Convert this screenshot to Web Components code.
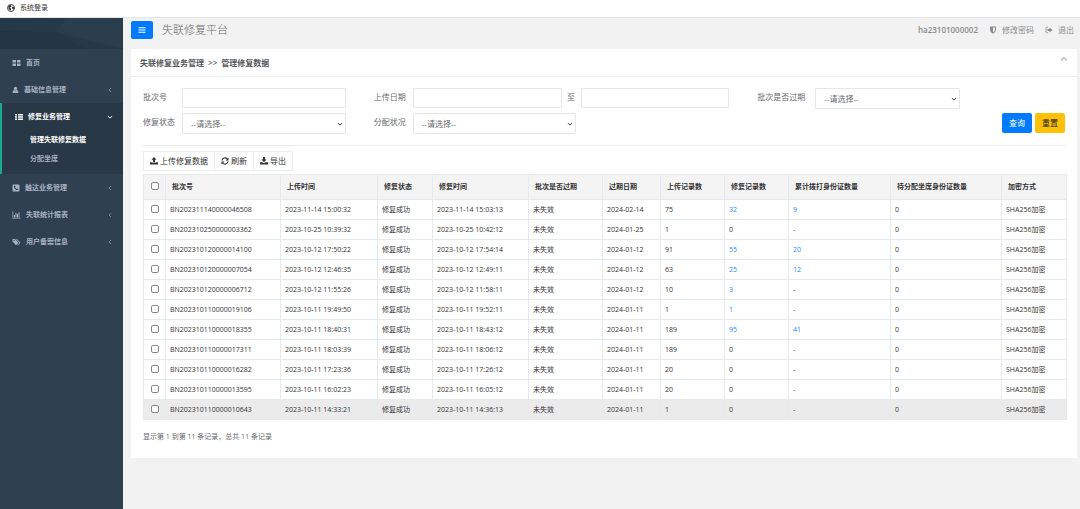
<!DOCTYPE html>
<html lang="zh-CN">
<head>
<meta charset="utf-8">
<meta name="viewport" content="width=device-width, initial-scale=1">
<title>失联修复平台</title>
<style>
html, body { margin: 0; height: 100%; }
body {
  font-family: "Open Sans", "Noto Sans CJK SC", sans-serif;
  font-size: 7px; line-height: 12px; color: #676a6c; background: #f2f2f2;
}
</style>
</head>
<body>
<repair-app></repair-app>
<script>
const ICONS = {
  globe: '<circle cx="8" cy="8" r="7" fill="none" stroke="currentColor" stroke-width="1.8"/><path d="M3 3l5-1 1 3-3 2 2 2 0 3-2 1-3-4zM11 5l4 2-1 4-3-1-1-3z"/>',
  grid: '<path d="M0 2h7v5H0zM9 2h7v5H9zM0 9h7v5H0zM9 9h7v5H9z"/>',
  user: '<circle cx="8" cy="4.5" r="3.7"/><path d="M1.500 15V12Q2 8 5 8q3 2 6 0 3 0 3.500 4v3z"/>',
  list: '<path d="M0 2h4v3H0zM6 2h10v3H6zM0 6.500h4v3H0zM6 6.500h10v3H6zM0 11h4v3H0zM6 11h10v3H6z"/>',
  phone: '<path fill-rule="evenodd" d="M3 1h10a2 2 0 0 1 2 2v10a2 2 0 0 1-2 2H3a2 2 0 0 1-2-2V3a2 2 0 0 1 2-2zM5.500 3 4 4c-1 4 4 9 8 8l1-1.500-2.500-1.700-1.200 1.200C8 9.500 6.500 8 6 6.700l1.200-1.200z"/>',
  chart: '<path d="M0 1h1.500v12.500H16V15H0zM3 8h2v4.500H3zM6 4h2v8.500H6zM9 6h2v6.500H9zM12 2.500h2v10h-2z"/>',
  tags: '<path fill-rule="evenodd" d="M0 2v5l7 7.500 5-5L5 2zM3 3.800a1.300 1.300 0 1 1 0 2.600 1.300 1.300 0 0 1 0-2.600z"/><path d="M7 2l7 7.500-5 5h2l5-5L9 2z"/>',
  left: '<path d="M10.500 3 5.500 8l5 5" fill="none" stroke="currentColor" stroke-width="1.800"/>',
  down: '<path d="M2.500 5.500 8 11l5.500-5.500" fill="none" stroke="currentColor" stroke-width="2.600"/>',
  up: '<path d="M2 11 8 5l6 6" fill="none" stroke="currentColor" stroke-width="2.400"/>',
  bars: '<path d="M1 2.500h14v2.200H1zM1 7h14v2.200H1zM1 11.500h14v2.200H1z"/>',
  shield: '<path fill-rule="evenodd" d="M2 1h12v7q0 4.500-6 7.500-6-3-6-7.500zM8 3v10q4-2.400 4-5V3z"/>',
  exit: '<path d="M6 2.500H3.500A1.500 1.500 0 0 0 2 4v8a1.500 1.500 0 0 0 1.500 1.500H6" fill="none" stroke="currentColor" stroke-width="1.600"/><path d="M5 6h4V3l6 5-6 5v-3H5z"/>',
  upload: '<path d="M8 0 3 5.500h3V11h4V5.500h3zM0 10.500h5v1.700h6v-1.700h5V15H0z"/>',
  download: '<path d="M8 10.500 3 5h3V0h4v5h3zM0 10.500h5l3 2 3-2h5V15H0z"/>',
  refresh: '<path d="M2 7a6 6 0 0 1 10.500-3M14 9a6 6 0 0 1-10.500 3" fill="none" stroke="currentColor" stroke-width="2.300"/><path d="M15 1v6H9zM1 15V9h6z"/>'
};
const BASE = `<style>
*, *::before { box-sizing: border-box; }
:host { display: block; }
a { color: inherit; text-decoration: none; }
button, input, select { font: inherit; margin: 0; }
</style>`;
class Base extends HTMLElement {
  connectedCallback() {
    if (this.shadowRoot) return;
    this.attachShadow({ mode: 'open' }).innerHTML = BASE + this.render();
  }
  attr(name) { return this.getAttribute(name) || ''; }
}

customElements.define('ui-icon', class extends Base {
  render() {
    return `<style>
:host { display: inline-block; width: 8px; height: 8px; flex: none; }
:host([name="user"]) { width: 7px; }
:host([name="chart"]), :host([name="tags"]), :host([name="grid"]) { width: 9px; }
svg { display: block; width: 100%; height: 100%; fill: currentColor; }
</style><svg viewBox="0 0 16 16" aria-hidden="true">${ICONS[this.attr('name')]}</svg>`;
  }
});

customElements.define('window-bar', class extends Base {
  render() {
    return `<style>
:host { display: flex; align-items: center; gap: 5px; height: 15px; padding: 0 7px 2px; background: #fff; color: #333; flex: none; }
</style><ui-icon name="globe"></ui-icon><slot></slot>`;
  }
});

customElements.define('nav-item', class extends Base {
  render() {
    const arrow = this.attr('arrow');
    return `<style>
:host { color: #a7b1c2; font-weight: 600; }
:host([active]) { background: #293846; color: #fff; border-left: 2px solid #19aa8d; padding-bottom: 6px; }
:host([active]) a { padding-left: 13px; }
a { display: flex; align-items: center; height: 27px; padding: 0 10px 0 12px; gap: 5px; }
.text { flex: 1; }
.arrow { width: 6px; height: 6px; }
</style><a href="#"><ui-icon name="${this.attr('icon')}"></ui-icon><span class="text">${this.attr('label')}</span>${arrow ? `<ui-icon class="arrow" name="${arrow}"></ui-icon>` : ''}</a><slot></slot>`;
  }
});

customElements.define('nav-sub', class extends Base {
  render() {
    return `<style>
:host { color: #a7b1c2; }
:host([current]) { color: #fff; }
a { display: flex; align-items: center; height: 19px; padding-left: 28px; }
</style><a href="#"><slot></slot></a>`;
  }
});

customElements.define('side-nav', class extends Base {
  render() {
    return `<style>
:host { width: 123px; flex: none; background: #2f4050; }
.banner { display: block; width: 100%; height: 31px; }
</style>
<svg class="banner" viewBox="0 0 123 31" preserveAspectRatio="none" aria-hidden="true">
<path fill="#263949" d="M0 0h123v31H0z"/><path fill="#293d4d" d="M66 0h57v31L56 14z"/><path fill="#233646" d="M0 13l56 1 30 17H0z"/></svg>
<nav>
<nav-item icon="grid" label="首页"></nav-item>
<nav-item icon="user" label="基础信息管理" arrow="left"></nav-item>
<nav-item icon="list" label="修复业务管理" arrow="down" active>
<nav-sub current>管理失联修复数据</nav-sub><nav-sub>分配坐席</nav-sub>
</nav-item>
<nav-item icon="phone" label="触达业务管理" arrow="left"></nav-item>
<nav-item icon="chart" label="失联统计报表" arrow="left"></nav-item>
<nav-item icon="tags" label="用户备案信息" arrow="left"></nav-item>
</nav>`;
  }
});

customElements.define('page-header', class extends Base {
  render() {
    return `<style>
:host { display: flex; align-items: center; height: 31px; padding: 0 6px 7px 8px; font-size: 8px; color: #888b8e; }
button { display: flex; align-items: center; justify-content: center; width: 22px; height: 18px; padding: 0; border: 0; border-radius: 2px; background: #007bff; color: #fff; }
h1 { flex: 1; margin: 0 0 0 9px; font-size: 11px; line-height: 18px; font-weight: 300; color: #676a6c; }
nav { display: flex; gap: 11px; }
a { display: flex; align-items: center; gap: 5px; }
b { font-weight: 600; }
</style>
<button type="button" aria-label="菜单"><ui-icon name="bars"></ui-icon></button>
<h1>失联修复平台</h1>
<nav><b>ha23101000002</b><a href="#"><ui-icon name="shield"></ui-icon>修改密码</a><a href="#"><ui-icon name="exit"></ui-icon>退出</a></nav>`;
  }
});

customElements.define('content-panel', class extends Base {
  render() {
    return `<style>
:host { margin: 0 3px 0 8px; background: #fff; }
header { display: flex; align-items: center; height: 28px; padding: 0 9px; border-bottom: 1px solid #eceeef; font-size: 8px; }
h2 { flex: 1; margin: 0; font-size: 8px; font-weight: 600; color: #55585b; }
h2 span { margin: 0 2px; }
button { display: flex; padding: 0 0 7px; border: 0; background: none; color: #b4b4b4; }
.body { padding: 11px 12px 15px; }
</style>
<header><h2>失联修复业务管理 <span>&gt;&gt;</span> 管理修复数据</h2><button type="button" aria-label="收起"><ui-icon name="up"></ui-icon></button></header>
<div class="body"><slot></slot></div>`;
  }
});

customElements.define('form-field', class extends Base {
  render() {
    const kind = this.attr('kind');
    const select = '<span class="box"><select id="f"><option>--请选择--</option></select><ui-icon name="down"></ui-icon></span>';
    const input = '<input id="f" type="text">';
    const range = '<input id="f" type="text"><label class="to" for="t">至</label><input id="t" type="text">';
    return `<style>
:host { display: flex; align-items: flex-start; font-size: 8px; }
label { width: 39px; flex: none; line-height: 18px; }
:host([wide]) label { width: 58px; }
label.to { width: 19px; text-align: center; }
input, select { display: block; flex: 1; width: 100%; min-width: 0; height: 20px; border: 1px solid #e5e6e7; border-radius: 1px; background: #fff; color: #676a6c; }
.box { position: relative; flex: 1; }
select { appearance: none; height: 21px; padding: 0 8px; }
.box ui-icon { position: absolute; right: 3px; top: 8px; width: 6px; height: 6px; color: #333; pointer-events: none; }
</style><label for="f">${this.attr('label')}</label>${kind === 'select' ? select : kind === 'range' ? range : input}`;
  }
});

customElements.define('search-form', class extends Base {
  render() {
    return `<style>
:host { padding-bottom: 11px; border-bottom: 1px solid #eceeef; }
form { display: grid; grid-template-columns: 203fr 356fr 203fr 77fr; column-gap: 28px; row-gap: 4px; align-items: start; }
.half { width: 57%; }
.actions { grid-column: 3 / 5; display: flex; justify-content: flex-end; gap: 3px; }
button { width: 30px; height: 20px; padding: 0; border: 0; border-radius: 2px; font-size: 8px; background: #007bff; color: #fff; }
button.reset { background: #ffc107; color: #212529; }
</style>
<form>
<form-field label="批次号"></form-field>
<form-field label="上传日期" kind="range"></form-field>
<form-field label="批次是否过期" kind="select" wide></form-field>
<span></span>
<form-field label="修复状态" kind="select"></form-field>
<form-field class="half" label="分配状况" kind="select"></form-field>
<div class="actions"><button type="button">查询</button><button type="reset" class="reset">重置</button></div>
</form>`;
  }
});

customElements.define('tool-bar', class extends Base {
  render() {
    return `<style>
:host { display: flex; margin: 5px 0 3px; }
button { display: flex; align-items: center; gap: 2px; height: 20px; padding: 0 6px; border: 1px solid #ebebeb; background: #fff; color: #333; font-size: 8px; }
button + button { border-left: 0; }
</style>
<button type="button"><ui-icon name="upload"></ui-icon>上传修复数据</button><button type="button"><ui-icon name="refresh"></ui-icon>刷新</button><button type="button"><ui-icon name="download"></ui-icon>导出</button>`;
  }
});

const COLUMNS = [['批次号', 115], ['上传时间', 97], ['修复状态', 55], ['修复时间', 96], ['批次是否过期', 74], ['过期日期', 58], ['上传记录数', 64], ['修复记录数', 64], ['累计拨打身份证数量', 102], ['待分配坐席身份证数量', 111], ['加密方式', 65]];
const ROWS = [
  ['BN202311140000046508', '2023-11-14 15:00:32', '2023-11-14 15:03:13', '2024-02-14', '75', '32', '9'],
  ['BN202310250000003362', '2023-10-25 10:39:32', '2023-10-25 10:42:12', '2024-01-25', '1', '0', '-'],
  ['BN202310120000014100', '2023-10-12 17:50:22', '2023-10-12 17:54:14', '2024-01-12', '91', '55', '20'],
  ['BN202310120000007054', '2023-10-12 12:46:35', '2023-10-12 12:49:11', '2024-01-12', '63', '25', '12'],
  ['BN202310120000006712', '2023-10-12 11:55:26', '2023-10-12 11:58:11', '2024-01-12', '10', '3', '-'],
  ['BN202310110000019106', '2023-10-11 19:49:50', '2023-10-11 19:52:11', '2024-01-11', '1', '1', '-'],
  ['BN202310110000018355', '2023-10-11 18:40:31', '2023-10-11 18:43:12', '2024-01-11', '189', '95', '41'],
  ['BN202310110000017311', '2023-10-11 18:03:39', '2023-10-11 18:06:12', '2024-01-11', '189', '0', '-'],
  ['BN202310110000016282', '2023-10-11 17:23:36', '2023-10-11 17:26:12', '2024-01-11', '20', '0', '-'],
  ['BN202310110000013595', '2023-10-11 16:02:23', '2023-10-11 16:05:12', '2024-01-11', '20', '0', '-'],
  ['BN202310110000010643', '2023-10-11 14:33:21', '2023-10-11 14:36:13', '2024-01-11', '1', '0', '-']
];
customElements.define('data-table', class extends Base {
  render() {
    const link = v => /^(0|-)$/.test(v) ? v : `<a href="#">${v}</a>`;
    const body = ROWS.map(([id, up, fix, exp, n, ok, calls], i) => {
      const cells = [id, up, '修复成功', fix, '未失效', exp, n, link(ok), link(calls), '0', 'SHA256加密'];
      return `<tr${i === ROWS.length - 1 ? ' class="hover"' : ''}><td class="check"><input type="checkbox" aria-label="选择 ${id}"></td>${cells.map(c => `<td>${c}</td>`).join('')}</tr>`;
    }).join('');
    return `<style>
table { width: 100%; table-layout: fixed; border-collapse: collapse; color: #333; line-height: 10px; }
th, td { height: 20px; padding: 0 4px; border: 1px solid #e7eaec; text-align: left; white-space: nowrap; }
th { height: 25px; padding: 0 6px; background: #f4f4f4; font-weight: 700; }
th.check, td.check { padding: 0; }
input { display: block; width: 8px; height: 8px; margin: 0 auto 2px; appearance: none; border: 1px solid #888; border-radius: 2px; background: #fff; }
input:checked { background: #007bff; }
a { color: #1a8cff; }
.hover { background: #ebebeb; }
</style>
<table><colgroup><col style="width:22px">${COLUMNS.map(c => `<col style="width:${c[1]}px">`).join('')}</colgroup>
<thead><tr><th class="check"><input type="checkbox" aria-label="全选"></th>${COLUMNS.map(c => `<th>${c[0]}</th>`).join('')}</tr></thead><tbody>${body}</tbody></table>`;
  }
});

customElements.define('table-summary', class extends Base {
  render() { return `<style>:host { margin-top: 11px; }</style><slot></slot>`; }
});

customElements.define('repair-app', class extends Base {
  render() {
    return `<style>
:host { display: flex; flex-direction: column; min-height: 100vh; }
window-bar { height: 17px; }
.frame { flex: 1; display: flex; border-top: 1px solid #e3e5e6; }
main { flex: 1; min-width: 0; }
</style>
<window-bar>系统登录</window-bar>
<div class="frame"><side-nav></side-nav><main>
<page-header></page-header>
<content-panel><search-form></search-form><tool-bar></tool-bar><data-table></data-table>
<table-summary>显示第 1 到第 11 条记录，总共 11 条记录</table-summary></content-panel>
</main></div>`;
  }
});
</script>
</body>
</html>
